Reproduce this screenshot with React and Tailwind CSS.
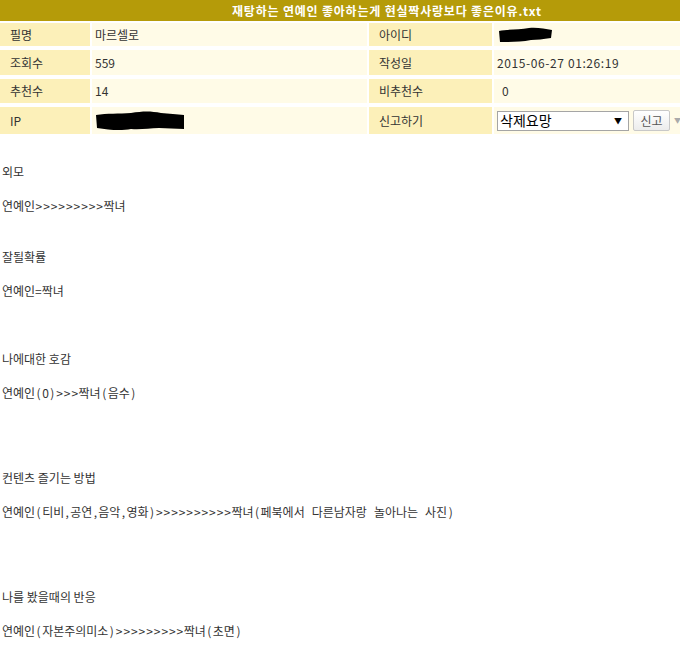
import React from "react";

const font = { fontFamily: '"Noto Sans CJK KR", "Noto Sans", sans-serif' };

function Blob({ w, h, d }) {
  return (
    <svg width={w} height={h} viewBox={`0 0 ${w} ${h}`} className="block">
      <path d={d} fill="#000" />
    </svg>
  );
}

function Label({ children, className = "" }) {
  return (
    <div className={`bg-[#fcf0b9] flex items-center pl-[10px] ${className}`}>{children}</div>
  );
}
function Value({ children, className = "" }) {
  return (
    <div className={`bg-[#fffbe7] flex items-center pl-[3px] ${className}`}>{children}</div>
  );
}

function Gt() {
  return <span className="inline-block w-[7.6px] text-center">&gt;</span>;
}
function Paren({ c }) {
  return <span className="inline-block w-[7px] text-center">{c}</span>;
}
function Comma() {
  return <span className="inline-block w-[6px] text-center">,</span>;
}
function Sp() {
  return <span className="inline-block w-[7px]">&nbsp;</span>;
}

function Line({ text }) {
  const parts = [];
  let buf = "";
  const flush = (k) => {
    if (buf) {
      parts.push(<span key={"t" + k}>{buf}</span>);
      buf = "";
    }
  };
  [...text].forEach((ch, i) => {
    if (ch === ">") {
      flush(i);
      parts.push(<Gt key={i} />);
    } else if (ch === "(" || ch === ")") {
      flush(i);
      parts.push(<Paren key={i} c={ch} />);
    } else if (ch === ",") {
      flush(i);
      parts.push(<Comma key={i} />);
    } else if (ch === " " && text.includes(">")) {
      flush(i);
      parts.push(<Sp key={i} />);
    } else {
      buf += ch;
    }
  });
  flush("end");
  return <div className="h-[17px] whitespace-nowrap">{parts}</div>;
}

export default function App() {
  const lines = [
    "외모",
    "",
    "연예인>>>>>>>>>짝녀",
    "",
    "",
    "잘될확률",
    "",
    "연예인=짝녀",
    "",
    "",
    "",
    "나에대한 호감",
    "",
    "연예인(0)>>>짝녀(음수)",
    "",
    "",
    "",
    "",
    "컨텐츠 즐기는 방법",
    "",
    "연예인(티비,공연,음악,영화)>>>>>>>>>>짝녀(페북에서 다른남자랑 놀아나는 사진)",
    "",
    "",
    "",
    "",
    "나를 봤을때의 반응",
    "",
    "연예인(자본주의미소)>>>>>>>>>짝녀(초면)",
  ];
  return (
    <div className="w-[680px] h-[650px] bg-white text-[12px] text-[#333] overflow-hidden" style={font}>
      <div className="h-[21px] bg-[#b59b09] flex items-center pl-[232px] text-white font-bold text-[12px] tracking-[0.8px] whitespace-nowrap">
        재탕하는 연예인 좋아하는게 현실짝사랑보다 좋은이유.txt
      </div>
      <div className="flex flex-col gap-[4px] mt-[2px]">
        <div className="grid grid-cols-[90px_275px_123px_1fr] gap-x-[2px] h-[23px]">
          <Label>필명</Label>
          <Value>마르셀로</Value>
          <Label className="pl-[6px]">아이디</Label>
          <Value>
            <Blob w={56} h={16} d="M2 4 C10 2 22 3 32 1 C40 0 48 2 55 3 L54 11 C46 12 40 13 34 13 C24 15 12 15 3 15 Z" />
          </Value>
        </div>
        <div className="grid grid-cols-[90px_275px_123px_1fr] gap-x-[2px] h-[25px]">
          <Label>조회수</Label>
          <Value>559</Value>
          <Label className="pl-[6px]">작성일</Label>
          <Value className="pl-[2px] tracking-[0.6px]">2015-06-27 01:26:19</Value>
        </div>
        <div className="grid grid-cols-[90px_275px_123px_1fr] gap-x-[2px] h-[24px]">
          <Label>추천수</Label>
          <Value>14</Value>
          <Label className="pl-[6px]">비추천수</Label>
          <Value className="pl-[8px]">0</Value>
        </div>
        <div className="grid grid-cols-[90px_275px_123px_1fr] gap-x-[2px] h-[27px]">
          <Label>IP</Label>
          <Value>
            <Blob w={90} h={22} d="M1 5 C12 3 24 4 36 3 C48 1 56 1 66 3 C74 4 82 4 89 5 L89 19 C80 19 72 18 64 18 C54 18 46 20 36 19 C26 21 14 20 2 18 Z" />
          </Value>
          <Label className="pl-[6px]">신고하기</Label>
          <Value className="pl-[1px] gap-[4px]">
            <div className="w-[132px] h-[20px] bg-white border border-[#a5a5a5] flex items-center justify-between pl-[2px] pr-[6px] text-[14px] text-black">
              <span>삭제요망</span>
              <span className="text-[8px]">▼</span>
            </div>
            <div className="h-[21px] w-[37px] border border-[#c8c8c8] rounded-[2px] bg-gradient-to-b from-white to-[#ececec] flex items-center justify-center text-[12px] text-[#555]">
              신고
            </div>
            <span className="text-[7px] text-[#aaa]">▼</span>
          </Value>
        </div>
      </div>
      <div className="mt-[29px] pl-[2px] leading-[17px]">
        {lines.map((l, i) => (
          <Line key={i} text={l} />
        ))}
      </div>
    </div>
  );
}
